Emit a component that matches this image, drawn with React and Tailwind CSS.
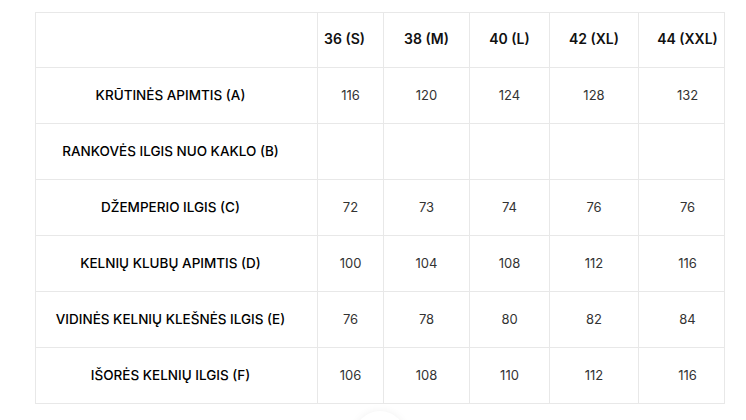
import React from "react";

const sizes = ["36 (S)", "38 (M)", "40 (L)", "42 (XL)", "44 (XXL)"];
const rows = [
  ["KRŪTINĖS APIMTIS (A)", ["116", "120", "124", "128", "132"]],
  ["RANKOVĖS ILGIS NUO KAKLO (B)", ["", "", "", "", ""]],
  ["DŽEMPERIO ILGIS (C)", ["72", "73", "74", "76", "76"]],
  ["KELNIŲ KLUBŲ APIMTIS (D)", ["100", "104", "108", "112", "116"]],
  ["VIDINĖS KELNIŲ KLEŠNĖS ILGIS (E)", ["76", "78", "80", "82", "84"]],
  ["IŠORĖS KELNIŲ ILGIS (F)", ["106", "108", "110", "112", "116"]],
];

const valPad = ["", "", "", "", "pl-[12px]"];

export default function App() {
  return (
    <div className="relative w-[746px] h-[420px] overflow-hidden bg-white" style={{ fontFamily: "Inter, 'Noto Sans', sans-serif" }}>
      <div className="pt-[12px] pl-[35px]">
        <div className="grid grid-cols-[282px_66px_86px_80px_89px_86px] w-[690px] border-l border-t border-[#e8e8e8]">
          <div className="h-[55px] border-r border-b border-[#e8e8e8]" />
          {sizes.map((s, i) => (
            <div
              key={s}
              className={`h-[55px] pb-[4px] border-r border-b border-[#e8e8e8] flex items-center justify-center text-[14px] font-semibold text-[#111] ${i === 0 ? "pr-[12px]" : ""} ${i === 4 ? "pl-[12px]" : ""}`}
            >
              {s}
            </div>
          ))}
          {rows.map(([label, vals]) => (
            <React.Fragment key={label}>
              <div className="h-[56px] border-r border-b border-[#e8e8e8] flex items-center justify-center pr-[12px] text-[13.5px] font-medium text-[#000]">
                {label}
              </div>
              {vals.map((v, i) => (
                <div
                  key={i}
                  className={`h-[56px] border-r border-b border-[#e8e8e8] flex items-center justify-center text-[13px] font-normal text-[#333] ${valPad[i]}`}
                >
                  {v}
                </div>
              ))}
            </React.Fragment>
          ))}
        </div>
      </div>
      <div className="absolute left-[354px] top-[411px] w-[52px] h-[52px] rounded-full bg-white shadow-[0_0_8px_rgba(0,0,0,0.06)]" />
    </div>
  );
}
